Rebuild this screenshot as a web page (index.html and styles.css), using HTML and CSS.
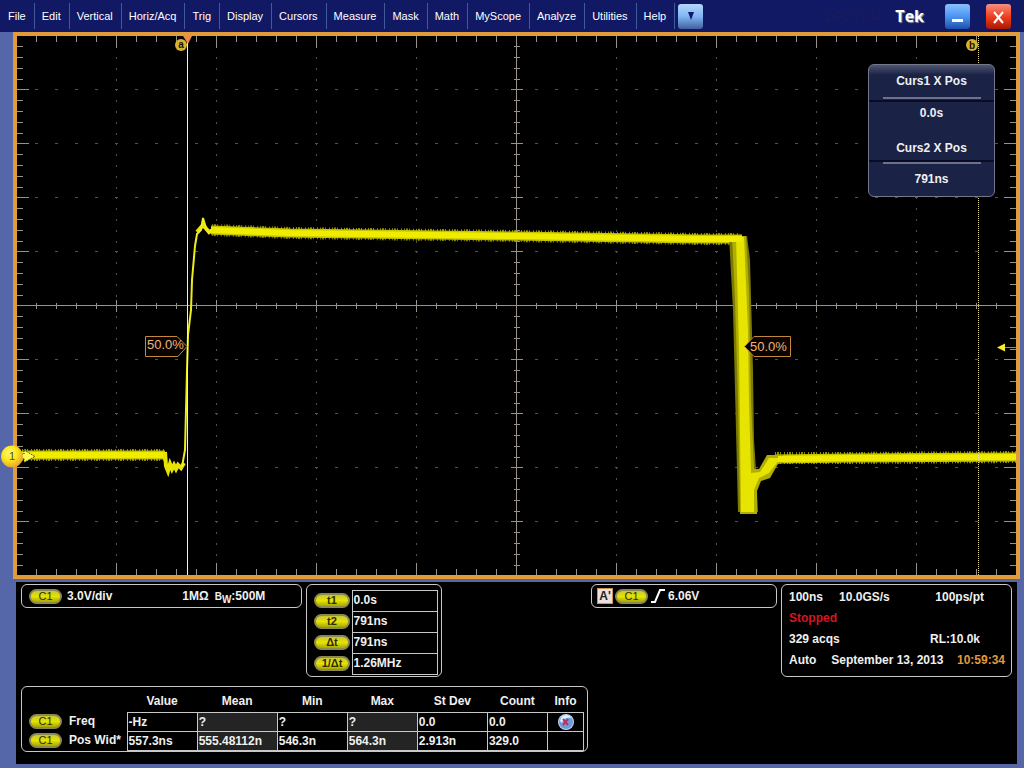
FILE: index.html
```html
<!DOCTYPE html>
<html lang="en">
<head>
    <meta charset="utf-8">
    <meta name="viewport" content="width=device-width, initial-scale=1.0">
    <title>TekScope</title>
    <link rel="stylesheet" href="styles.css">
</head>
<body>
    <header class="menubar">
        <nav class="menu">
            <a href="#">File</a>
            <a href="#">Edit</a>
            <a href="#">Vertical</a>
            <a href="#">Horiz/Acq</a>
            <a href="#">Trig</a>
            <a href="#">Display</a>
            <a href="#">Cursors</a>
            <a href="#">Measure</a>
            <a href="#">Mask</a>
            <a href="#">Math</a>
            <a href="#">MyScope</a>
            <a href="#">Analyze</a>
            <a href="#">Utilities</a>
            <a href="#">Help</a>
        </nav>
        <button class="bar-btn more-btn" aria-label="More menus">
            <svg width="8" height="8" viewBox="0 0 8 8"><path d="M1 0h6L4 8z" fill="#0c1a70"/></svg>
        </button>
        <span class="model">DPO7104</span>
        <span class="brand">Tek</span>
        <button class="bar-btn min-btn" aria-label="Minimize">
            <svg width="25" height="25" viewBox="0 0 25 25"><path d="M7 15h11v3H7z" fill="#fff"/></svg>
        </button>
        <button class="bar-btn close-btn" aria-label="Close">
            <svg width="25" height="25" viewBox="0 0 25 25"><path d="M8 8l9 11M17 8L8 19" stroke="#fff" stroke-width="2" fill="none"/></svg>
        </button>
    </header>

    <main class="screen">
        <svg class="plot" viewBox="17 36 999 539">
            <defs>
                <radialGradient id="chan" cx="40%" cy="35%" r="65%">
                    <stop offset="0" stop-color="#fffb80"/>
                    <stop offset="0.5" stop-color="#fbe81c"/>
                    <stop offset="1" stop-color="#e8a42c"/>
                </radialGradient>
            </defs>
            <!-- graticule -->
            <g class="grid-dots" shape-rendering="crispEdges">
                <path class="cols" d="M116.5 57v518M216.5 57v518M316.5 57v518M416.5 57v518M616.5 57v518M716.5 57v518M816.5 57v518M916.5 57v518"/>
                <path class="rows" d="M35 89.5h980M35 143.5h980M35 197.5h980M35 251.5h980M35 359.5h980M35 413.5h980M35 467.5h980M35 521.5h980"/>
            </g>
            <g class="axes" shape-rendering="crispEdges">
                <path d="M17 305.5h999M516.5 36v539"/>
                <path class="tick-x" d="M36 39h980M36 572h980M36 305.5h980"/>
                <path class="major-x" d="M116 42h900M116 569h900M116 305.5h900"/>
                <path class="tick-y" d="M20 46.2v529M1013 46.2v529M516.5 46.2v529"/>
                <path class="major-y" d="M23 89v486M1010 89v486M516.5 89v486"/>
            </g>
            <!-- trace, dim fringe first -->
            <path class="fringe" d="M22 455H165M212 230L290 233L516 236L700 239H740M775 458L850 458L1016 457"/>
            <path class="band" d="M22 455H165M211 230L290 233L516 236L700 239H742M775 459L850 458L1016 457"/>
            <path class="fall-dim" d="M729 236H747L750 260L753 370L754 440L756 470L758 512H738L736 430L733 310Z"/>
            <path class="fall-mid" d="M732 236H746L749 290L751 400L754 469H759L767 455H783V463L778 464L770 478L761 481L757 491L757 514H740L738 400L735 300Z"/>
            <path class="fall-core" d="M736 237L744 237L748 330L749 400L751 473L760 472L769 458H781L769 473L759 478L754 490V512H741L739 350Z"/>
            <path class="core" d="M22 455H165M211 230L290 233L516 236L700 239H742M778 459L850 458L1016 457"/>
            <path class="rise-wide" d="M165 452L166 466L168 471L170 464L172 469L174 465L176 469L178 465L181 468L184 463M197 232L203 225L209 232L215 229"/>
            <path class="rise" d="M182 467L185 450L187 370L188 335L191 310L192 280L195 246L197 234L201 230L203 218L206 228L209 233L212 229"/>
            <!-- cursors -->
            <g shape-rendering="crispEdges">
                <path class="cursor-a" d="M187.5 36V575"/>
                <path class="cursor-b" d="M978.5 36V575"/>
            </g>
            <path d="M183 36h9l-4 8z" fill="#f08a48"/>
            <circle cx="181" cy="45" r="6" fill="#d6b232"/>
            <text class="badge" x="181" y="48">a</text>
            <circle cx="972" cy="45" r="6" fill="#d6b232"/>
            <text class="badge" x="972" y="49">b</text>
            <path class="tag" d="M145.5 336.5H177L187 346.5L178 356.5H145.5Z"/>
            <text class="tag-text" x="147" y="349">50.0%</text>
            <path class="tag" d="M790.5 336.5H754L744.5 346.5L754 356.5H790.5Z"/>
            <text class="tag-text" x="750" y="351">50.0%</text>
            <!-- trigger level and channel marker -->
            <path d="M1005 347.5H1016" stroke="#8c9430"/>
            <path d="M997 347.5L1005 343.5V351.5Z" fill="#f6ee2c"/>
            <path d="M20 454h4v-4l11 6.500l-11 6v-4h-4z" fill="#fffb50" stroke="#222" stroke-dasharray="1 1"/>
            <circle cx="12" cy="456.5" r="11" fill="url(#chan)"/>
            <text class="chan-no" x="12" y="460">1</text>
        </svg>

        <section class="readout">
            <h2>Curs1 X Pos</h2>
            <hr>
            <p>0.0s</p>
            <h2>Curs2 X Pos</h2>
            <hr class="flip">
            <p>791ns</p>
        </section>
    </main>

    <section class="status">
        <div class="status-row">
            <div class="box channel-box">
                <span class="pill">C1</span>
                <span class="scale">3.0V/div</span>
                <span class="coupling">1MΩ</span>
                <span class="bw">B<sub>W</sub></span>
                <span>:500M</span>
            </div>
            <div class="box cursor-box">
                <table class="cursor-table">
                    <tr><th><span class="pill">t1</span></th><td>0.0s</td></tr>
                    <tr><th><span class="pill">t2</span></th><td>791ns</td></tr>
                    <tr><th><span class="pill">Δt</span></th><td>791ns</td></tr>
                    <tr><th><span class="pill">1/Δt</span></th><td>1.26MHz</td></tr>
                </table>
            </div>
            <div class="box trigger-box">
                <span class="trig-a">A'</span>
                <span class="pill">C1</span>
                <svg width="16" height="16" viewBox="0 0 16 16"><path d="M1 14H5L10 2H15" fill="none" stroke="#fff" stroke-width="2"/></svg>
                <span>6.06V</span>
            </div>
            <div class="box acq-box">
                <div class="acq-row"><span class="timebase">100ns</span><span>10.0GS/s</span><span class="res">100ps/pt</span></div>
                <div class="acq-row stopped">Stopped</div>
                <div class="acq-row"><span>329 acqs</span><span class="record">RL:10.0k</span></div>
                <div class="acq-row"><span>Auto</span><span class="date">September 13, 2013</span><span class="time">10:59:34</span></div>
            </div>
        </div>

        <div class="box measure-box">
            <table class="measure-table">
                <colgroup>
                    <col class="c-name"><col class="c-std"><col class="c-mean"><col class="c-std"><col class="c-std"><col class="c-std"><col class="c-count"><col class="c-info">
                </colgroup>
                <thead>
                    <tr><td></td><th>Value</th><th>Mean</th><th>Min</th><th>Max</th><th>St Dev</th><th>Count</th><th>Info</th></tr>
                </thead>
                <tbody>
                    <tr>
                        <th><span class="pill">C1</span>Freq</th>
                        <td>-Hz</td><td class="shade">?</td><td>?</td><td class="shade">?</td><td>0.0</td><td>0.0</td>
                        <td class="info">
                            <svg width="16" height="16" viewBox="0 0 16 16">
                                <circle cx="8" cy="8" r="8" fill="#c4d8ec"/>
                                <circle cx="8" cy="8" r="7" fill="#6c9cdc"/>
                                <path d="M2 7Q3 1 8 1Q12 1 13 4Q6 3 4 9Z" fill="#e4f0fc"/>
                                <path d="M5 5L10 11M10 5L5 11" stroke="#b83468" stroke-width="2"/>
                            </svg>
                        </td>
                    </tr>
                    <tr>
                        <th><span class="pill">C1</span>Pos Wid*</th>
                        <td>557.3ns</td><td class="shade">555.48112n</td><td>546.3n</td><td class="shade">564.3n</td><td>2.913n</td><td>329.0</td><td></td>
                    </tr>
                </tbody>
            </table>
        </div>
    </section>
</body>
</html>
```
FILE: styles.css
```css
* {
    margin: 0;
    padding: 0;
    box-sizing: border-box;
}
body {
    background: #5567a8;
    color: #f0f0f0;
    font-family: "Liberation Sans", Arial, sans-serif;
    font-size: 12px;
    font-weight: bold;
}

/* menu bar */
.menubar {
    display: flex;
    align-items: center;
    height: 32px;
    padding-right: 13px;
    background: #111864;
    font-weight: normal;
}
.menu {
    display: flex;
    padding-left: 1px;
}
.menu a {
    padding: 0 8px 0 7px;
    border-right: 1px solid #405a9c;
    color: #fff;
    font-size: 11px;
    line-height: 26px;
    text-decoration: none;
}
.bar-btn {
    display: flex;
    align-items: center;
    justify-content: center;
    width: 25px;
    height: 25px;
    border: none;
    border-radius: 3px;
}
.more-btn {
    margin-left: 3px;
    background: linear-gradient(#b4d8fc, #80b4f4 50%, #40609c);
}
.model {
    margin-left: auto;
    margin-right: 14px;
    color: #1b1c58;
    font-size: 13px;
}
.brand {
    margin-right: 21px;
    color: #fff;
    font-family: "Open Sans", sans-serif;
    font-size: 16px;
    font-weight: bold;
    text-shadow: 1px 1px 1px #999;
}
.min-btn {
    margin-right: 16px;
    background: linear-gradient(#88c0fc, #4c94f4 50%, #1c50ac);
}
.close-btn {
    background: linear-gradient(#f49080, #f04020 50%, #a81804);
}

/* waveform screen */
.screen {
    position: relative;
    margin: 0 4px 0 13px;
    border: 4px solid #e09c38;
    background: #000;
}
.plot {
    display: block;
    width: 100%;
    height: auto;
    overflow: visible;
}
.grid-dots path {
    fill: none;
    stroke: #54524c;
}
.grid-dots .cols {
    stroke-dasharray: 2 8.8;
}
.grid-dots .rows {
    stroke-dasharray: 3 17;
}
.axes path {
    fill: none;
    stroke: #98928a;
}
.axes .tick-x {
    stroke-width: 6;
    stroke-dasharray: 1 19;
}
.axes .major-x {
    stroke-width: 12;
    stroke-dasharray: 1 99;
}
.axes .tick-y {
    stroke-width: 6;
    stroke-dasharray: 1 9.8;
}
.axes .major-y {
    stroke-width: 12;
    stroke-dasharray: 1 53;
}
.fringe {
    fill: none;
    stroke: #8c8a00;
    stroke-width: 12;
    stroke-dasharray: 1 1 2 1 1 3 1 2;
}
.band {
    fill: none;
    stroke: #c6c400;
    stroke-width: 9;
}
.core {
    fill: none;
    stroke: #f0ec00;
    stroke-width: 6;
}
.rise {
    fill: none;
    stroke: #f0ec1c;
    stroke-width: 2;
}
.rise-wide {
    fill: none;
    stroke: #e8e400;
    stroke-width: 4;
}
.fall-dim {
    fill: #7c7a00;
}
.fall-mid {
    fill: #b0ae00;
}
.fall-core {
    fill: #e6e400;
}
.cursor-a {
    stroke: #fbf8a0;
}
.cursor-b {
    stroke: #e4dc88;
    stroke-dasharray: 1 1;
}
.badge {
    fill: #1c1400;
    font-size: 10px;
    text-anchor: middle;
}
.tag {
    fill: #0a0400;
    stroke: #c08838;
}
.tag-text {
    fill: #f0b47c;
    font-size: 13px;
    font-weight: normal;
}
.chan-no {
    fill: #5c4c10;
    font-size: 11px;
    font-weight: normal;
    text-anchor: middle;
}

/* cursor readout */
.readout {
    position: absolute;
    top: 28px;
    right: 21px;
    width: 127px;
    padding: 6px 0 7px;
    border: 1px solid #73788c;
    border-radius: 6px;
    background: linear-gradient(#50566e, #1a2246 10px);
    text-align: center;
}
.readout h2 {
    font-size: 12px;
    line-height: 20px;
}
.readout p {
    margin-bottom: 15px;
    line-height: 20px;
}
.readout p:last-child {
    margin-bottom: 0;
}
.readout hr {
    height: 5px;
    margin: 6px 0 1px;
    border: none;
    border-bottom: 2px solid #080c24;
    background: linear-gradient(#6c7088, #6c7088) center top / 98px 2px no-repeat;
}
.readout .flip {
    margin: 2px 0 4px;
    border-top: 2px solid #080c24;
    border-bottom: none;
}

/* readouts below the screen */
.status {
    display: flex;
    flex-direction: column;
    gap: 9px;
    min-height: 182px;
    margin: 3px 7px 4px 16px;
    padding: 2px 5px 12px;
    background: #000;
}
.status-row {
    display: flex;
    align-items: flex-start;
    gap: 4px;
}
.box {
    border: 1px solid #c8c8c8;
    border-radius: 6px;
}
.pill {
    display: inline-block;
    width: 33px;
    height: 15px;
    border: 2px solid #8c8a50;
    border-radius: 8px;
    background: linear-gradient(#c8c638, #e6e400 50%, #a8a600);
    color: #2c2c00;
    font-size: 11px;
    font-weight: normal;
    line-height: 11px;
    text-align: center;
}
.channel-box {
    display: flex;
    align-items: center;
    flex: 0 1 281px;
    height: 24px;
    padding-left: 7px;
}
.scale {
    margin-left: 5px;
}
.coupling {
    margin-left: 70px;
}
.bw {
    margin-left: 6px;
    font-size: 10px;
}
.bw sub {
    font-size: 10px;
    line-height: 0;
}
.cursor-box {
    width: 136px;
    height: 93px;
    padding: 5px 3px 0 7px;
}
.cursor-table {
    width: 100%;
    border-collapse: collapse;
}
.cursor-table th {
    width: 38px;
    padding-bottom: 2px;
    line-height: 0;
    text-align: left;
}
.cursor-table td {
    height: 21px;
    padding: 0 0 2px 1px;
    border: 1px solid #c8c8c8;
}
.cursor-table .pill {
    width: 36px;
    font-weight: bold;
}
.trigger-box {
    display: flex;
    align-items: center;
    flex: 0 1 186px;
    height: 24px;
    margin-left: auto;
    padding-left: 5px;
}
.trig-a {
    width: 16px;
    margin-right: 2px;
    border: 1px solid #d09050;
    background: #ece0dc;
    color: #222;
    line-height: 14px;
    text-align: center;
}
.trigger-box svg {
    margin: 0 2px;
}
.acq-box {
    flex: 0 1 231px;
    height: 93px;
    padding: 2px 6px 5px 7px;
}
.acq-row {
    display: flex;
    line-height: 21px;
    white-space: nowrap;
}
.timebase {
    margin-right: 16px;
}
.res {
    margin-left: auto;
    margin-right: 21px;
}
.record {
    margin-left: auto;
    margin-right: 25px;
}
.stopped {
    color: #d81420;
}
.date {
    margin-left: 15px;
}
.time {
    margin-left: auto;
    color: #e0983c;
}
.measure-box {
    align-self: flex-start;
    padding: 2px 3px 0 7px;
}
.measure-table {
    table-layout: fixed;
    width: 555px;
    border-collapse: collapse;
}
.c-name {
    width: 98px;
}
.c-std {
    width: 70px;
}
.c-mean {
    width: 80px;
}
.c-count {
    width: 60px;
}
.c-info {
    width: 36px;
}
.measure-table thead th {
    height: 23px;
    padding-top: 2px;
}
.measure-table tbody th {
    text-align: left;
    white-space: nowrap;
}
.measure-table tbody td {
    height: 19px;
    padding-left: 1px;
    border: 1px solid #c8c8c8;
}
.measure-table .pill {
    margin-right: 7px;
    vertical-align: middle;
}
.measure-table .shade {
    background: #242424;
}
.measure-table .info {
    line-height: 0;
    text-align: center;
}
```
